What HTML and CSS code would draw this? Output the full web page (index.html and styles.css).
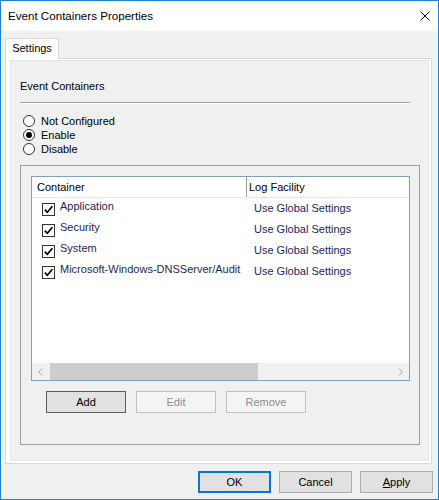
FILE: index.html
```html
<!DOCTYPE html>
<html>
<head>
<meta charset="utf-8">
<link rel="stylesheet" href="styles.css">
</head>
<body>
<div class="window">
  <div class="titlebar">
    <span class="title">Event Containers Properties</span>
    <svg class="close" width="10" height="10" viewBox="0 0 10 10"><path d="M0.5 0.5 L9.5 9.5 M9.5 0.5 L0.5 9.5" stroke="#000" stroke-width="1" fill="none"/></svg>
  </div>
  <div class="client">
    <div class="tabs"><div class="tab">Settings</div></div>
    <div class="tabpage">
      <div class="panel">
        <div class="section-label">Event Containers</div>
        <div class="sep"></div>
        <div class="radios">
          <div class="radio"><span class="rb"></span><span>Not Configured</span></div>
          <div class="radio"><span class="rb checked"></span><span>Enable</span></div>
          <div class="radio"><span class="rb"></span><span>Disable</span></div>
        </div>
        <div class="box">
          <div class="listview">
            <div class="lv-header">
              <div class="hc1">Container</div>
              <div class="hc2">Log Facility</div>
            </div>
            <div class="lv-body">
              <div class="row"><div class="c1"><span class="cb"><svg width="11" height="11" viewBox="0 0 11 11"><path d="M1.8 5.6 L4.3 8.3 L9.4 2.2" stroke="#000" stroke-width="1.7" fill="none"/></svg></span><span class="t1">Application</span></div><div class="c2">Use Global Settings</div></div>
              <div class="row"><div class="c1"><span class="cb"><svg width="11" height="11" viewBox="0 0 11 11"><path d="M1.8 5.6 L4.3 8.3 L9.4 2.2" stroke="#000" stroke-width="1.7" fill="none"/></svg></span><span class="t1">Security</span></div><div class="c2">Use Global Settings</div></div>
              <div class="row"><div class="c1"><span class="cb"><svg width="11" height="11" viewBox="0 0 11 11"><path d="M1.8 5.6 L4.3 8.3 L9.4 2.2" stroke="#000" stroke-width="1.7" fill="none"/></svg></span><span class="t1">System</span></div><div class="c2">Use Global Settings</div></div>
              <div class="row"><div class="c1"><span class="cb"><svg width="11" height="11" viewBox="0 0 11 11"><path d="M1.8 5.6 L4.3 8.3 L9.4 2.2" stroke="#000" stroke-width="1.7" fill="none"/></svg></span><span class="t1">Microsoft-Windows-DNSServer/Audit</span></div><div class="c2">Use Global Settings</div></div>
            </div>
            <div class="hscroll">
              <div class="arrow"><svg width="5" height="8" viewBox="0 0 5 8"><path d="M4 0.5 L0.8 4 L4 7.5" stroke="#a6a6a6" stroke-width="1" fill="none"/></svg></div>
              <div class="track"><div class="thumb"></div></div>
              <div class="arrow"><svg width="5" height="8" viewBox="0 0 5 8"><path d="M1 0.5 L4.2 4 L1 7.5" stroke="#a6a6a6" stroke-width="1" fill="none"/></svg></div>
            </div>
          </div>
          <div class="btnrow">
            <button class="btn btn-focus">Add</button>
            <button class="btn btn-disabled">Edit</button>
            <button class="btn btn-disabled">Remove</button>
          </div>
        </div>
      </div>
    </div>
    <div class="footer">
      <button class="btn dlg btn-default">OK</button>
      <button class="btn dlg">Cancel</button>
      <button class="btn dlg"><u>A</u>pply</button>
    </div>
  </div>
</div>
</body>
</html>
```

FILE: styles.css
```css
* { box-sizing: border-box; }
body {
  margin: 0;
  font-family: "Liberation Sans", Arial, sans-serif;
  font-size: 11px;
  color: #000;
}
.window {
  width: 439px;
  height: 500px;
  border: 1px solid #1883d7;
  background: #f0f0f0;
  display: flex;
  flex-direction: column;
}
.titlebar {
  height: 30px;
  flex: none;
  background: #fff;
  display: flex;
  align-items: center;
  justify-content: space-between;
  padding-left: 7px;
}
.title {
  font-size: 11.6px;
  line-height: 30px;
}
.close {
  margin-right: 8px;
  margin-top: -1px;
}
.client {
  height: 468px;
  padding: 7px 0 6px 4px;
  display: flex;
  flex-direction: column;
}
.tabs {
  display: flex;
  height: 20px;
  flex: none;
}
.tab {
  width: 54px;
  height: 21px;
  border: 1px solid #d9d9d9;
  border-bottom: none;
  background: #fff;
  text-align: center;
  line-height: 18px;
  position: relative;
  z-index: 1;
}
.tabpage {
  width: 427px;
  height: 406px;
  flex: none;
  border: 1px solid #d9d9d9;
  background: #fff;
  padding: 1px 2px 2px 4px;
}
.panel {
  height: 100%;
  border: 1px solid #e6e6e6;
  background: #f0f0f0;
  padding: 19px 0 0 9px;
}
.section-label {
  line-height: 13px;
  height: 13px;
}
.sep {
  width: 390px;
  margin-top: 9px;
  border-top: 1px solid #a0a0a0;
  border-bottom: 1px solid #fff;
}
.radios {
  margin-top: 10px;
}
.radio {
  height: 14px;
  line-height: 14px;
  display: flex;
  align-items: center;
}
.rb {
  width: 12px;
  height: 12px;
  margin-left: 3px;
  margin-right: 6px;
  border: 1px solid #333;
  border-radius: 50%;
  background: #fff;
  display: flex;
  align-items: center;
  justify-content: center;
}
.rb.checked::after {
  content: "";
  width: 6px;
  height: 6px;
  border-radius: 50%;
  background: #000;
}
.box {
  margin-top: 9px;
  width: 400px;
  height: 280px;
  border: 1px solid #a0a0a0;
  padding: 10px 0 0 10px;
}
.listview {
  width: 379px;
  height: 205px;
  border: 1px solid #82a0be;
  background: #fff;
  display: flex;
  flex-direction: column;
}
.lv-header {
  height: 21px;
  flex: none;
  border-bottom: 1px solid #e5e5e5;
  display: flex;
  line-height: 20px;
}
.hc1 {
  width: 215px;
  padding-left: 5px;
  border-right: 1px solid #9a9a9a;
}
.hc2 {
  padding-left: 2px;
}
.lv-body {
  flex: 1;
}
.row {
  height: 21px;
  display: flex;
  color: #1e1e5a;
}
.c1 {
  width: 215px;
  display: flex;
  align-items: flex-start;
  padding-left: 10px;
}
.cb {
  width: 13px;
  height: 13px;
  margin-top: 5px;
  border: 1px solid #333;
  background: #fff;
  display: flex;
  align-items: center;
  justify-content: center;
}
.t1 {
  line-height: 17px;
  margin-left: 5px;
}
.c2 {
  padding-left: 7px;
  line-height: 21px;
}
.hscroll {
  height: 17px;
  flex: none;
  display: flex;
  background: #f0f0f0;
}
.arrow {
  width: 17px;
  flex: none;
  display: flex;
  align-items: center;
  justify-content: center;
}
.track {
  flex: 1;
  display: flex;
}
.thumb {
  width: 208px;
  margin-left: 1px;
  background: #cdcdcd;
}
.btnrow {
  display: flex;
  gap: 10px;
  margin-top: 10px;
  padding-left: 15px;
}
.btn {
  width: 80px;
  height: 22px;
  padding: 0;
  font-family: inherit;
  font-size: 11px;
  color: #000;
  background: #e1e1e1;
  border: 1px solid #adadad;
}
.btn-focus {
  border-color: #5e5e5e;
}
.btn-disabled {
  background: #f4f4f4;
  border-color: #bfbfbf;
  color: #8d8d8d;
}
.footer {
  margin-top: 7px;
  display: flex;
  justify-content: flex-end;
  gap: 8px;
  padding-right: 5px;
}
.dlg {
  width: 73px;
}
.btn-default {
  border: 2px solid #0078d7;
}
```
